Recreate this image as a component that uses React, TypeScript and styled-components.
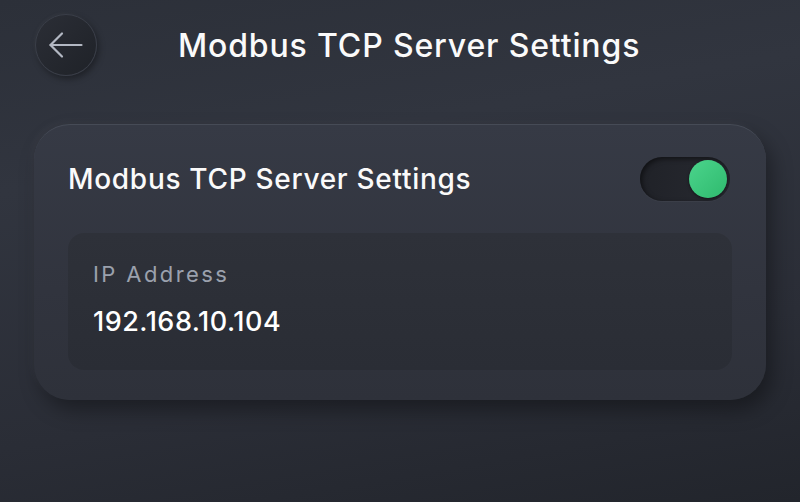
import React from "react";
import styled, { createGlobalStyle } from "styled-components";

const Global = createGlobalStyle`
  html, body { margin: 0; padding: 0; }
  body { font-family: "Inter", "Open Sans", sans-serif; background: #2b2f38; }
`;

const Screen = styled.div`
  width: 800px;
  height: 502px;
  overflow: hidden;
  background: linear-gradient(170deg, #2c3039 0%, #31353f 30%, #2a2d36 70%, #22252c 100%);
  color: #fff;
  display: flex;
  flex-direction: column;
`;

const Header = styled.header`
  display: flex;
  align-items: center;
  height: 62px;
  padding: 14px 0 0 35px;
  gap: 81px;
`;

const BackButton = styled.button`
  width: 62px;
  height: 62px;
  border-radius: 50%;
  border: 1px solid #3a3e48;
  background: linear-gradient(135deg, #2b2e36 0%, #1f2228 100%);
  box-shadow: 2px 3px 6px rgba(0, 0, 0, 0.35), -1px -1px 3px rgba(255, 255, 255, 0.04);
  display: flex;
  align-items: center;
  justify-content: center;
  padding: 0;
  color: #b3b8c3;
`;

const Title = styled.h1`
  margin: 0;
  font-size: 32px;
  font-weight: 500;
  letter-spacing: 0.85px;
  color: #fafafa;
`;

const Card = styled.section`
  margin: 48px 34px 0 34px;
  height: 276px;
  box-sizing: border-box;
  border-radius: 36px;
  background: linear-gradient(180deg, #363a45 0%, #31343e 60%, #2e313a 100%);
  border-top: 1px solid #464b56;
  box-shadow: 6px 10px 20px rgba(0, 0, 0, 0.35), -3px -3px 8px rgba(255, 255, 255, 0.03);
  padding: 32px 34px 30px 34px;
  display: flex;
  flex-direction: column;
`;

const CardRow = styled.div`
  display: flex;
  align-items: center;
  justify-content: space-between;
  height: 44px;
`;

const CardTitle = styled.h2`
  margin: 0;
  font-size: 28px;
  font-weight: 500;
  letter-spacing: 0.7px;
  color: #fafafa;
`;

const Toggle = styled.div`
  width: 90px;
  height: 44px;
  border-radius: 22px;
  background: linear-gradient(90deg, #202228 0%, #272930 100%);
  box-shadow: inset 2px 2px 5px rgba(0, 0, 0, 0.5), 0 1px 1px rgba(255, 255, 255, 0.04);
  display: flex;
  align-items: center;
  justify-content: flex-end;
  padding: 0 3px;
  box-sizing: border-box;
  margin-right: 2px;
`;

const Knob = styled.div`
  width: 38px;
  height: 38px;
  border-radius: 50%;
  background: linear-gradient(135deg, #4bd48c 0%, #2fba6e 100%);
  box-shadow: 0 1px 3px rgba(0, 0, 0, 0.5);
`;

const Field = styled.div`
  margin-top: 32px;
  border-radius: 16px;
  background: linear-gradient(180deg, #2e3139 0%, #2a2d35 100%);
  height: 138px;
  padding: 28px 25px;
  box-sizing: border-box;
  display: flex;
  flex-direction: column;
  gap: 19px;
`;

const Label = styled.div`
  font-size: 22px;
  color: #9ba1ad;
  letter-spacing: 2.4px;
  line-height: 26px;
`;

const Value = styled.div`
  font-size: 27px;
  font-weight: 500;
  color: #ffffff;
  letter-spacing: 0.5px;
  line-height: 32px;
`;

export default function App() {
  return (
    <Screen>
      <Global />
      <Header>
        <BackButton aria-label="Back">
          <svg width="36" height="28" viewBox="0 0 36 28" fill="none" stroke="currentColor" strokeWidth="2.2" strokeLinecap="round" strokeLinejoin="round">
            <path d="M2.5 14H33.5" />
            <path d="M14 2.5L2.5 14L14 25.5" />
          </svg>
        </BackButton>
        <Title>Modbus TCP Server Settings</Title>
      </Header>
      <Card>
        <CardRow>
          <CardTitle>Modbus TCP Server Settings</CardTitle>
          <Toggle>
            <Knob />
          </Toggle>
        </CardRow>
        <Field>
          <Label>IP Address</Label>
          <Value>192.168.10.104</Value>
        </Field>
      </Card>
    </Screen>
  );
}
